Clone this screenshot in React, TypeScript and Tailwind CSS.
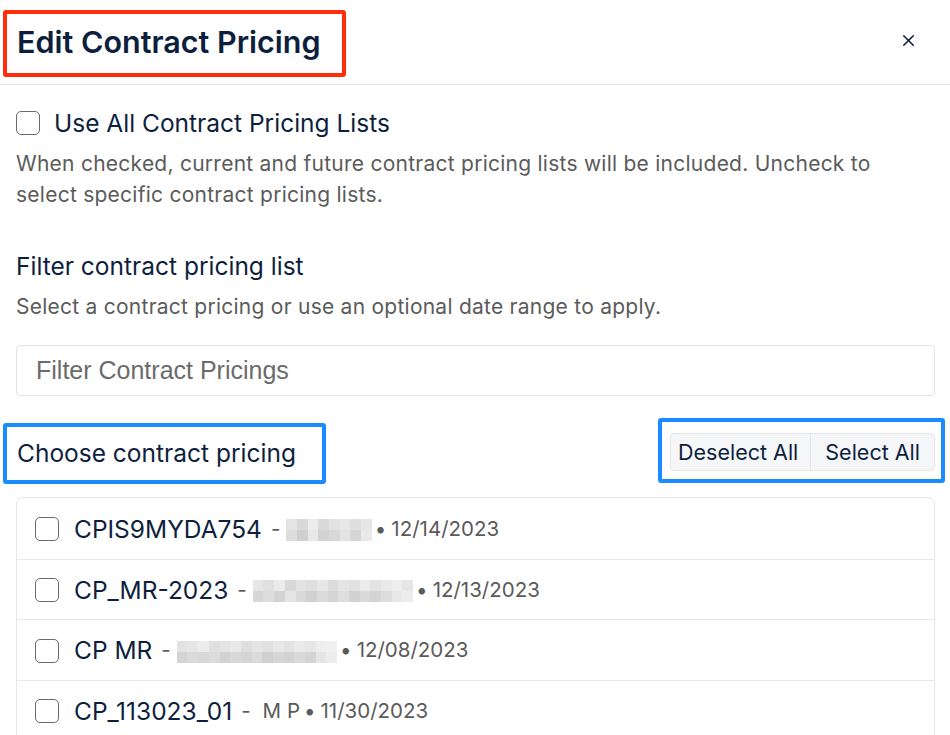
import { X } from "lucide-react";

const navy = "text-[#0e1f3e]";

type Row = {
  name: string;
  note?: string;
  blur?: string[][];
  date: string;
};

// pixelated placeholder for the redacted names
const blurA = [
  ["#e4e4e4", "#d9d9d9", "#ececec", "#dadada", "#e2e2e2", "#e8e8e8", "#dfdfdf", "#e6e6e6"],
  ["#dcdcdc", "#cfcfcf", "#e8e8e8", "#d3d3d3", "#d8d8d8", "#e3e3e3", "#d6d6d6", "#e9e9e9"],
];
const blurB = [
  ["#e6e6e6", "#e0e0e0", "#ebebeb", "#d8d8d8", "#e3e3e3", "#dfdfdf", "#e7e7e7", "#dcdcdc", "#e5e5e5", "#e1e1e1", "#ebebeb", "#e3e3e3", "#e9e9e9", "#eeeeee", "#e6e6e6"],
  ["#d6d6d6", "#dddddd", "#d3d3d3", "#e4e4e4", "#d9d9d9", "#d1d1d1", "#dbdbdb", "#d5d5d5", "#dedede", "#d2d2d2", "#d9d9d9", "#d4d4d4", "#dddddd", "#e8e8e8", "#ececec"],
];
const blurC = [
  ["#e2e2e2", "#e6e6e6", "#ececec", "#e0e0e0", "#e4e4e4", "#e9e9e9", "#dedede", "#e5e5e5", "#e1e1e1", "#e7e7e7", "#e3e3e3", "#eaeaea", "#e6e6e6", "#eeeeee", "#f0f0f0"],
  ["#d4d4d4", "#dadada", "#d7d7d7", "#dcdcdc", "#d2d2d2", "#d8d8d8", "#d5d5d5", "#dbdbdb", "#d0d0d0", "#d6d6d6", "#d3d3d3", "#d9d9d9", "#d4d4d4", "#e5e5e5", "#ededed"],
];

const rows: Row[] = [
  { name: "CPIS9MYDA754", blur: blurA, date: "12/14/2023" },
  { name: "CP_MR-2023", blur: blurB, date: "12/13/2023" },
  { name: "CP MR", blur: blurC, date: "12/08/2023" },
  { name: "CP_113023_01", note: "M P", date: "11/30/2023" },
];

function Blur({ cells }: { cells: string[][] }) {
  return (
    <span className="inline-flex flex-col ml-[6px] mr-[3px] mt-[2px]">
      {cells.map((line, i) => (
        <span key={i} className="flex">
          {line.map((c, j) => (
            <span key={j} className="w-[10.7px] h-[11px]" style={{ background: c }} />
          ))}
        </span>
      ))}
    </span>
  );
}

function Box() {
  return <span className="w-[24px] h-[24px] shrink-0 rounded-[5px] border border-[#6b6b6b] bg-white" />;
}

export default function App() {
  return (
    <div className={`w-[950px] h-[735px] overflow-hidden bg-white font-['Inter',sans-serif] ${navy}`}>
      <div className="h-[85px] border-b border-[#e6e6e6] flex items-start justify-between pl-[3px] pr-[32px]">
        <div className="mt-[10px] h-[67px] border-4 border-[#ff2d0a] rounded-[3px] flex items-center pl-[10px] pr-[21px]">
          <h1 className="text-[30.5px] font-semibold -mt-[3px]">Edit Contract Pricing</h1>
        </div>
        <X size={19} strokeWidth={1.9} className="mt-[31px]" />
      </div>

      <div className="pl-[16px] pr-[15px]">
        <label className="mt-[26px] h-[24px] flex items-center gap-[14px]">
          <Box />
          <span className="text-[24.5px] leading-[24px]">Use All Contract Pricing Lists</span>
        </label>
        <p className="mt-[13px] max-w-[890px] text-[21px] tracking-[0.25px] leading-[31px] text-[#5b5b5b]">
          When checked, current and future contract pricing lists will be included. Uncheck to select specific contract pricing lists.
        </p>

        <h2 className="mt-[41px] text-[24.5px] leading-[30px]">Filter contract pricing list</h2>
        <p className="mt-[11px] text-[21px] tracking-[0.25px] leading-[30px] text-[#5b5b5b]">
          Select a contract pricing or use an optional date range to apply.
        </p>

        <div className="mt-[23px] h-[51px] rounded-[4px] border border-[#e3e3e3] flex items-center pl-[19px] text-[25px] text-[#6b6b6b] font-['Liberation_Sans',sans-serif]">
          Filter Contract Pricings
        </div>

        <div className="mt-[22px] flex items-start justify-between">
          <div className="-ml-[13px] mt-[5px] h-[61px] border-4 border-[#1a8cff] rounded-[3px] flex items-center pl-[10px] pr-[26px]">
            <span className="text-[24.5px]">Choose contract pricing</span>
          </div>
          <div className="-mr-[10px] h-[65px] border-4 border-[#1a8cff] rounded-[3px] pl-[8px] pr-[6px] pt-[11px]">
            <div className="flex h-[38px] rounded-[4px] border border-[#e4e6ea] bg-[#f5f6f8] text-[21.5px]">
              <button className="pl-[7px] pr-[12px] border-r border-[#e1e3e7]">Deselect All</button>
              <button className="pl-[14px] pr-[14px]">Select All</button>
            </div>
          </div>
        </div>

        <div className="mt-[13px] border border-[#e6e6e6] rounded-t-[7px]">
          {rows.map((r, i) => (
            <div
              key={r.name}
              className={`h-[60.5px] flex items-center pl-[18px] gap-[15px] pt-[2px] ${i > 0 ? "border-t border-[#e9e9e9]" : ""}`}
            >
              <Box />
              <div className="flex items-center text-[20.5px] text-[#5a5a5a] whitespace-nowrap">
                <span className={`text-[24.5px] ${navy}`}>{r.name}</span>
                <span className="ml-[9px]">-</span>
                {r.blur ? <Blur cells={r.blur} /> : <span className="ml-[12px] mr-[4px]">{r.note}</span>}
                <span>•</span>
                <span className="ml-[5px]">{r.date}</span>
              </div>
            </div>
          ))}
        </div>
      </div>
    </div>
  );
}
